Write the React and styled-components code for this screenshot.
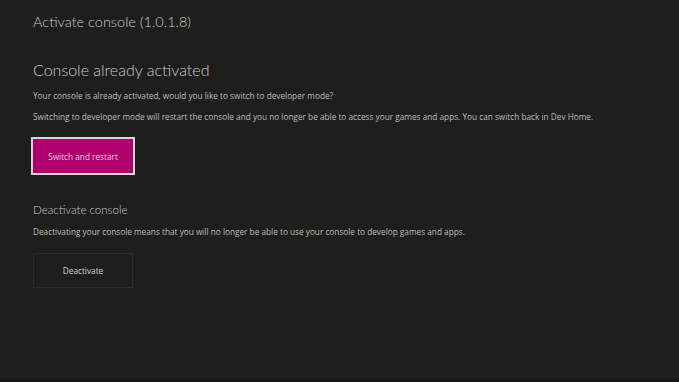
import React from "react";
import styled, { createGlobalStyle } from "styled-components";

const Global = createGlobalStyle`
  html, body { margin: 0; padding: 0; background: #1e1e1c; }
  body { font-family: "Open Sans", "Noto Sans", sans-serif; }
`;

const Page = styled.div`
  width: 679px;
  height: 381px;
  border-bottom: 1px solid #0c0c0c;
  background: #1e1e1c;
  padding: 0 0 0 33px;
  box-sizing: border-box;
  display: flex;
  flex-direction: column;
  align-items: flex-start;
  color: #c4c4c4;
`;

const Title = styled.h1`
  margin: 12px 0 0 0;
  font-family: "Lato", "Open Sans", sans-serif;
  font-size: 14.5px;
  font-weight: 300;
  line-height: 20px;
  color: #c9c9c9;
`;

const Heading = styled.h2`
  margin: ${(p) => p.$top}px 0 0 0;
  font-family: "Lato", "Open Sans", sans-serif;
  font-size: ${(p) => p.$size}px;
  font-weight: 300;
  line-height: ${(p) => p.$lh}px;
  color: #cacaca;
`;

const Text = styled.p`
  margin: ${(p) => p.$top}px 0 0 0;
  font-size: 8.25px;
  line-height: 12px;
  color: #bdbdbd;
`;

const Button = styled.button`
  margin: ${(p) => p.$top}px 0 0 ${(p) => (p.$primary ? -2 : 0)}px;
  width: ${(p) => (p.$primary ? 104 : 100)}px;
  height: ${(p) => (p.$primary ? 38 : 35)}px;
  box-sizing: border-box;
  font-family: inherit;
  font-size: 8.25px;
  color: ${(p) => (p.$primary ? "#f0c8e0" : "#d2d2d2")};
  background: ${(p) => (p.$primary ? "#b0006d" : "transparent")};
  border: ${(p) => (p.$primary ? "2px solid #d6d6d6" : "1px solid #2c2c2a")};
  padding: 0;
  cursor: pointer;
`;

export default function App() {
  return (
    <>
      <Global />
      <Page>
        <Title>Activate console (1.0.1.8)</Title>
        <Heading $top={28} $size={16} $lh={20}>Console already activated</Heading>
        <Text $top={10}>Your console is already activated, would you like to switch to developer mode?</Text>
        <Text $top={9}>
          Switching to developer mode will restart the console and you no longer be able to access your games and apps. You can switch back in Dev Home.
        </Text>
        <Button $primary $top={14}>Switch and restart</Button>
        <Heading $top={27} $size={11.5} $lh={16}>Deactivate console</Heading>
        <Text $top={8}>Deactivating your console means that you will no longer be able to use your console to develop games and apps.</Text>
        <Button $top={15}>Deactivate</Button>
      </Page>
    </>
  );
}
